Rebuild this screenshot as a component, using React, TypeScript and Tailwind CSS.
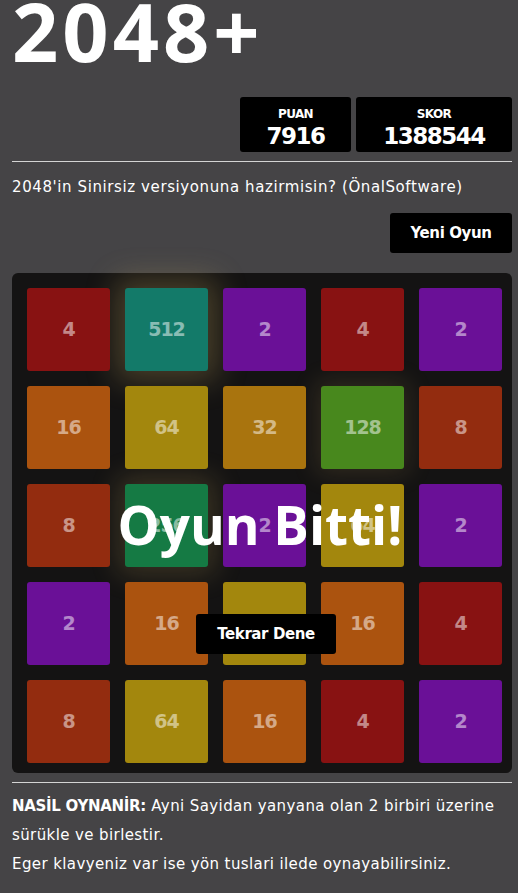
import React from "react";

type TileValue = 2 | 4 | 8 | 16 | 32 | 64 | 128 | 256 | 512;

const board: TileValue[][] = [
  [4, 512, 2, 4, 2],
  [16, 64, 32, 128, 8],
  [8, 256, 2, 64, 2],
  [2, 16, 64, 16, 4],
  [8, 64, 16, 4, 2],
];

const tileColor: Record<TileValue, string> = {
  2: "bg-[#6a1097]",
  4: "bg-[#881212]",
  8: "bg-[#932c0f]",
  16: "bg-[#ab530f]",
  32: "bg-[#a9740e]",
  64: "bg-[#a3870d]",
  128: "bg-[#48881d]",
  256: "bg-[#157a44]",
  512: "bg-[#137a69]",
};

// higher tiles get a warm glow; plain tiles sit above it
const tileGlow: Record<TileValue, string> = {
  2: "z-[1]",
  4: "z-[1]",
  8: "z-[1]",
  16: "z-[1]",
  32: "z-[1]",
  64: "z-[1]",
  128: "shadow-[0_0_24px_6px_rgba(210,180,100,0.14)]",
  256: "shadow-[0_0_28px_8px_rgba(210,180,100,0.2)]",
  512: "shadow-[0_0_30px_10px_rgba(210,180,100,0.28)]",
};

function ScoreBox({ label, value, width }: { label: string; value: string; width: string }) {
  return (
    <div className={`${width} h-[55px] rounded-[3px] bg-black pt-[10px] text-center text-white font-['DejaVu_Sans',sans-serif] font-bold`}>
      <div className="text-[12px] leading-[14px] tracking-[-0.6px]">{label}</div>
      <div className="mt-[3px] text-[23px] leading-[24px] tracking-[-1.5px]">{value}</div>
    </div>
  );
}

export default function App() {
  return (
    <div className="min-h-screen w-[518px] bg-[#454446] pl-[12px] pr-[6px] pb-6 text-white font-['DejaVu_Sans',sans-serif]">
      <h1 className="h-[62px] text-[81px] leading-[62px] font-bold tracking-[4px] font-['Open_Sans',sans-serif]">
        2048+
      </h1>

      <div className="mt-[35px] flex justify-end gap-[5px]">
        <ScoreBox label="PUAN" value="7916" width="w-[111px]" />
        <ScoreBox label="SKOR" value="1388544" width="w-[156px]" />
      </div>

      <div className="mt-[9px] border-t border-[#d4d4d4]" />

      <p className="mt-[15px] text-[15px] leading-[20px] tracking-[0.6px]">
        2048'in Sinirsiz versiyonuna hazirmisin? (ÖnalSoftware)
      </p>

      <div className="mt-[16px] flex justify-end">
        <button className="h-[40px] w-[122px] rounded-[3px] bg-black text-[15px] font-bold tracking-[-0.4px] text-white">
          Yeni Oyun
        </button>
      </div>

      <div className="relative mt-[20px] h-[500px] w-[500px] rounded-[6px] bg-[#141313] pt-[15px] pl-[15px]">
        <div className="grid grid-cols-[repeat(5,83px)] auto-rows-[83px] gap-[15px]">
          {board.flat().map((v, i) => (
            <div
              key={i}
              className={`relative flex items-center justify-center rounded-[3px] ${tileColor[v]} ${tileGlow[v]} text-[19px] font-bold tracking-[-1px] text-white/50`}
            >
              {v}
            </div>
          ))}
        </div>

        <div className="absolute inset-0 z-10 flex flex-col items-center pt-[225px]">
          <div className="mr-[4px] text-[53px] leading-[53px] font-bold text-white font-['Open_Sans',sans-serif]">
            Oyun Bitti!
          </div>
          <button className="ml-[8px] mt-[63px] h-[40px] w-[140px] rounded-[3px] bg-black text-[15px] font-bold tracking-[-0.4px] text-white">
            Tekrar Dene
          </button>
        </div>
      </div>

      <div className="mt-[9px] border-t border-[#d4d4d4]" />

      <div className="mt-[9px] text-[15px] leading-[29px] tracking-[0.4px]">
        <p>
          <span className="font-bold tracking-[-0.3px]">NASİL OYNANİR:</span> Ayni Sayidan yanyana olan 2 birbiri üzerine sürükle ve birlestir.
        </p>
        <p>Eger klavyeniz var ise yön tuslari ilede oynayabilirsiniz.</p>
      </div>
    </div>
  );
}
